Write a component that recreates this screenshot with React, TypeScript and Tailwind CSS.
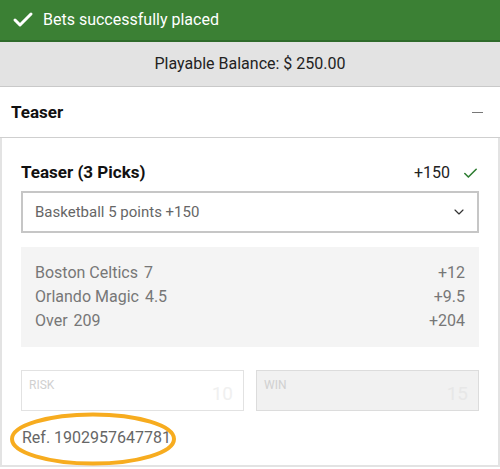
import { Check, ChevronDown } from 'lucide-react';

const picks = [
  { team: 'Boston Celtics', line: '7', odds: '+12' },
  { team: 'Orlando Magic', line: '4.5', odds: '+9.5' },
  { team: 'Over', line: '209', odds: '+204' },
];

export default function App() {
  return (
    <div className="w-[500px] h-[469px] bg-white font-['Roboto',sans-serif] overflow-hidden">
      {/* success banner */}
      <div className="h-[42px] bg-[#3b8034] border-b-2 border-[#2f6b2b] flex items-center pl-[11px] text-white">
        <Check size={24} strokeWidth={3} className="text-white" />
        <span className="ml-[8px] text-[16px]">Bets successfully placed</span>
      </div>

      {/* balance */}
      <div className="h-[45px] bg-[#e3e3e3] border-b border-[#c9c9c9] flex items-center justify-center text-[16px] text-[#222]">
        Playable Balance: $ 250.00
      </div>

      {/* section header */}
      <div className="h-[51px] border-b border-[#cfcfcf] flex items-center justify-between pl-[11px] pr-[17px]">
        <span className="text-[17px] font-bold text-[#111] pt-[2px]">Teaser</span>
        <span className="block w-[11px] h-px bg-[#777]" />
      </div>

      {/* bet card */}
      <div className="border-x-2 border-b-2 border-[#e3e3e3] px-[19px] pt-[23px] pb-[15px]">
        <div className="h-[24px] flex items-center justify-between">
          <span className="text-[17px] font-bold text-[#111]">Teaser (3 Picks)</span>
          <div className="flex items-center">
            <span className="text-[16px] text-[#222]">+150</span>
            <Check size={17} strokeWidth={2.25} className="ml-[12px] text-[#2e7d32]" />
          </div>
        </div>

        <div className="mt-[6px] h-[42px] border-2 border-[#c6c6c6] flex items-center justify-between pl-[12px] pr-[10px]">
          <span className="text-[15px] text-[#666]">Basketball 5 points +150</span>
          <ChevronDown size={16} strokeWidth={1.75} className="text-[#333]" />
        </div>

        <div className="mt-[14px] bg-[#f4f4f4] px-[14px] py-[14px] text-[16px] text-[#777]">
          {picks.map((p) => (
            <div key={p.team} className="h-[24px] flex items-center justify-between">
              <span>
                {p.team}
                <span className="ml-[6px]">{p.line}</span>
              </span>
              <span>{p.odds}</span>
            </div>
          ))}
        </div>

        <div className="mt-[23px] grid grid-cols-2 gap-[12px]">
          <div className="h-[41px] border border-[#e2e2e2] bg-white relative">
            <span className="absolute left-[7px] top-[5px] text-[12px] text-[#d0d0d0]">RISK</span>
            <span className="absolute right-[10px] bottom-[2px] text-[19px] text-[#f0f0f0]">10</span>
          </div>
          <div className="h-[41px] border border-[#dcdcdc] bg-[#f1f1f1] relative">
            <span className="absolute left-[7px] top-[5px] text-[12px] text-[#d0d0d0]">WIN</span>
            <span className="absolute right-[10px] bottom-[2px] text-[19px] text-[#e7e7e7]">15</span>
          </div>
        </div>

        <div className="mt-[15px] h-[24px] flex items-center relative">
          <span className="text-[16px] text-[#666] pl-[1px]">Ref. 1902957647781</span>
          <svg className="absolute left-[-11px] top-[-14px]" width="172" height="55" viewBox="0 0 172 55">
            <ellipse cx="83" cy="27" rx="81" ry="24.5" fill="none" stroke="#f7ac1f" strokeWidth="4" />
          </svg>
        </div>
      </div>
    </div>
  );
}
